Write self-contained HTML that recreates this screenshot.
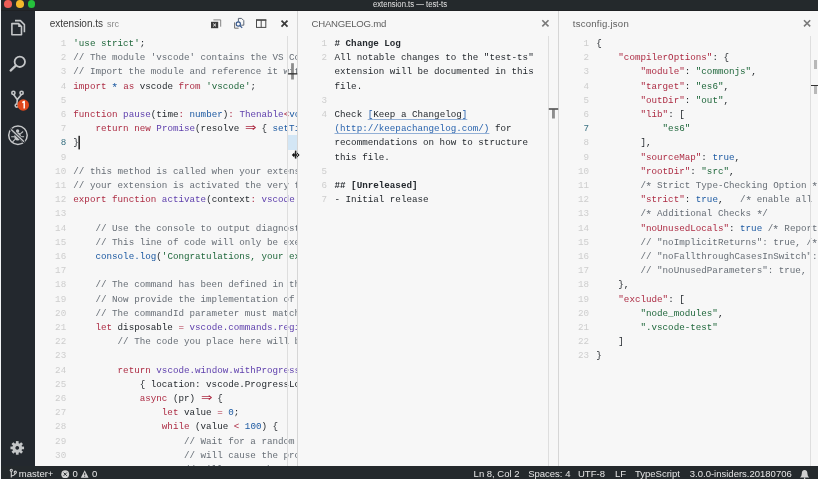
<!DOCTYPE html>
<html><head><meta charset="utf-8">
<style>
*{margin:0;padding:0;box-sizing:border-box}
html,body{width:818px;height:479px;overflow:hidden;background:#f7f7f7;font-family:"Liberation Sans",sans-serif}
.abs{position:absolute}
#title{left:0;top:0;width:818px;height:10px;background:#24292c;overflow:hidden}
#title .t{position:absolute;left:1px;width:818px;top:0.3px;text-align:center;color:#e4e4e4;font-size:8.3px;line-height:8px;transform:scaleX(0.93)}
.dot{position:absolute;top:0.3px;width:7.6px;height:7.6px;border-radius:50%}
#act{left:0;top:10px;width:35px;height:456px;background:#23282e}
#lb{left:0;top:0;width:1px;height:479px;background:#f2f4f6}
#status{left:0;top:466px;width:818px;height:13px;background:#24292c;color:#e6e6e6;font-size:9.5px;line-height:13px}
#status span{position:absolute;top:1.3px}
.grp{position:absolute;top:10px;height:456px;overflow:hidden;background:#f7f7f7}
.hdr{position:absolute;left:0;top:0;right:0;height:26px;font-size:9px;color:#777}
.hdr .nm{position:absolute;top:8px;line-height:12px;color:#6a6a6a}
.code{position:absolute;top:27px;left:0;right:0;font-family:"Liberation Mono",monospace;font-size:9.23px;line-height:14.2px;color:#24292e;white-space:pre}
.num{position:absolute;top:27px;font-family:"Liberation Mono",monospace;font-size:9.23px;line-height:14.2px;color:#cecece;text-align:right;white-space:pre}
.sb{position:absolute;top:26px;bottom:0;width:1px;background:#dedede}
.vb{position:absolute;top:11px;height:455px;width:1px;background:#d6d6d6}
.k{color:#ad2c44}.f{color:#5f40ad}.s{color:#1f673b}.c{color:#676e76}.b{color:#1d5aa2}
.lig{display:inline-block;width:11.04px;text-align:center;font-family:"Liberation Sans",sans-serif;font-size:11px;line-height:10px;transform:scaleX(1.25)}
.lnk{color:#2a64ae;text-decoration:underline;text-decoration-color:#93b0d6;text-underline-offset:2.2px;text-decoration-thickness:0.9px}
.bold{font-weight:bold}
.ast{display:inline-block;transform:translateY(1.6px) scale(1.25)}
svg{position:absolute;overflow:visible}
</style></head><body><div style="position:absolute;left:0;top:0;width:818px;height:479px;will-change:transform">
<div id="title" class="abs">
  <div class="dot" style="left:4.4px;background:#ee5e57"></div>
  <div class="dot" style="left:16.1px;background:#f4b92c"></div>
  <div class="dot" style="left:27.7px;background:#25c13c"></div>
  <div class="t">extension.ts — test-ts</div>
</div>
<div id="act" class="abs">
  <svg width="35" height="456" style="left:0;top:0" viewBox="0 10 35 456">
    <g fill="none" stroke="#c4c6c8" stroke-width="1.6" stroke-linejoin="round">
      <path d="M11.9 23.6 h6.6 l3 3 v8.2 h-9.6 z"/>
      <path d="M15 20.6 h5.4 l4 4 v7.6"/>
    </g>
    <path d="M18.2 23.6 v3.3 h3.3 z" fill="#c4c6c8"/>
    <g fill="none" stroke="#c4c6c8">
      <circle cx="19.8" cy="61.8" r="5.2" stroke-width="1.8"/>
      <path d="M10.6 70.6 L15.8 65.6" stroke-width="2.2" stroke-linecap="round"/>
    </g>
    <g fill="none" stroke="#c4c6c8" stroke-width="1.6">
      <circle cx="13.4" cy="92.9" r="1.6"/>
      <circle cx="21.6" cy="92.9" r="1.6"/>
      <circle cx="16.8" cy="105.6" r="1.6"/>
      <path d="M13.6 94.5 L17.3 99.6 L21.4 94.5 M17.3 99.6 L16.9 104"/>
    </g>
    <circle cx="23.2" cy="105" r="5.8" fill="#e0481c"/>
    <path d="M22.3 102.6 L24.2 101.4 V108.6" fill="none" stroke="#fff" stroke-width="1.5" stroke-linejoin="round"/>
    <circle cx="17.95" cy="135.3" r="9.25" fill="none" stroke="#c4c6c8" stroke-width="1.5"/>
    <g fill="#c4c6c8">
      <ellipse cx="17.6" cy="136.6" rx="3.3" ry="4"/>
      <circle cx="17.6" cy="131" r="1.7"/>
    </g>
    <g stroke="#c4c6c8" stroke-width="1.1" stroke-linecap="round">
      <path d="M14.6 133.6 L12.4 131.8 M14.3 136.8 L11.6 136.8 M14.8 139.6 L12.8 141.6 M20.6 133.6 L22.8 131.8 M20.9 136.8 L23.6 136.8 M20.4 139.6 L22.4 141.6"/>
    </g>
    <path d="M10.6 129 L24.6 142.3" stroke="#23282e" stroke-width="3"/>
    <path d="M11.2 129.6 L24 141.7" stroke="#c4c6c8" stroke-width="1.4"/>
    <g transform="translate(17.25 447.9)" fill="#c4c6c8">
      <path d="M0 -4.9 a4.9 4.9 0 1 0 0.01 0 z M0 -1.9 a1.9 1.9 0 1 1 -0.01 0 z" fill-rule="evenodd"/>
      <rect x="-1.35" y="-6.8" width="2.7" height="3" transform="rotate(0)"/><rect x="-1.35" y="-6.8" width="2.7" height="3" transform="rotate(45)"/><rect x="-1.35" y="-6.8" width="2.7" height="3" transform="rotate(90)"/><rect x="-1.35" y="-6.8" width="2.7" height="3" transform="rotate(135)"/><rect x="-1.35" y="-6.8" width="2.7" height="3" transform="rotate(180)"/><rect x="-1.35" y="-6.8" width="2.7" height="3" transform="rotate(225)"/><rect x="-1.35" y="-6.8" width="2.7" height="3" transform="rotate(270)"/><rect x="-1.35" y="-6.8" width="2.7" height="3" transform="rotate(315)"/>
    </g>
  </svg>
</div>
<!-- group 1 -->
<div class="grp" style="left:35px;width:262px">
  <div class="hdr">
    <div class="nm" style="left:14.7px;color:#3a3a3a;font-size:10px;top:8px">extension.ts<span style="color:#8a8a8a;font-size:9px;margin-left:4px">src</span></div>
    <svg width="262" height="26" style="left:0;top:0" viewBox="35 10 262 26">
      <rect x="211" y="21.8" width="7.2" height="6.4" fill="#3c3c3c"/>
      <path d="M213.2 23.6 l2.8 2.8 M216 23.6 l-2.8 2.8" stroke="#f2f2f2" stroke-width="1"/>
      <path d="M213.4 19.9 h7.3 v6.8" fill="none" stroke="#777" stroke-width="0.9"/>
      <path d="M234.6 22.4 v5.8 h4" fill="none" stroke="#6e6e6e" stroke-width="1"/>
      <path d="M238.4 21.6 v-3.2 h3.2 l2.2 2.2 v4.6 h-2.6" fill="none" stroke="#5a6575" stroke-width="1"/>
      <circle cx="238.3" cy="24" r="2.1" fill="none" stroke="#34558a" stroke-width="1.1"/>
      <path d="M239.8 25.5 l2.4 2.4" stroke="#34558a" stroke-width="1.1"/>
      <rect x="256.5" y="19.8" width="9.3" height="7.6" fill="none" stroke="#4a4a4a" stroke-width="1"/>
      <path d="M256 20.2 h10.3" stroke="#4a4a4a" stroke-width="1.2"/>
      <path d="M261.2 20 v7.4" stroke="#4a4a4a" stroke-width="1"/>
      <path d="M281.5 20.7 l6 6 M287.5 20.7 l-6 6" stroke="#3a3a3a" stroke-width="1.7"/>
    </svg>
  </div>
  <div class="num" style="left:0;width:31.2px">1
2
3
4
5
6
7
<span style="color:#3b7283">8</span>
9
10
11
12
13
14
15
16
17
18
19
20
21
22
23
24
25
26
27
28
29
30
31</div>
  <div class="code" style="left:38.3px"><span class="s">'use strict'</span>;
<span class="c">// The module 'vscode' contains the VS Code extensibility API</span>
<span class="c">// Import the module and reference it with the alias vscode in your code below</span>
<span class="k">import</span> <span class="b"><span class="ast">*</span></span> <span class="k">as</span> vscode <span class="k">from</span> <span class="s">'vscode'</span>;

<span class="k">function</span> <span class="f">pause</span>(time<span class="k">:</span> <span class="b">number</span>)<span class="k">:</span> <span class="f">Thenable</span><span class="k">&lt;</span><span class="b">void</span><span class="k">&gt;</span> {
    <span class="k">return</span> <span class="k">new</span> <span class="f">Promise</span>(resolve <span class="k lig">⇒</span> { <span class="b">setTimeout</span>(resolve, time); });
}

<span class="c">// this method is called when your extension is activated</span>
<span class="c">// your extension is activated the very first time the command is executed</span>
<span class="k">export</span> <span class="k">function</span> <span class="f">activate</span>(context<span class="k">:</span> <span class="f">vscode.ExtensionContext</span>) {

    <span class="c">// Use the console to output diagnostic information (console.log) and errors (console.error)</span>
    <span class="c">// This line of code will only be executed once when your extension is activated</span>
    <span class="b">console.log</span>(<span class="s">'Congratulations, your extension "test-ts" is now active!'</span>);

    <span class="c">// The command has been defined in the package.json file</span>
    <span class="c">// Now provide the implementation of the command with registerCommand</span>
    <span class="c">// The commandId parameter must match the command field in package.json</span>
    <span class="k">let</span> disposable <span class="k">=</span> <span class="f">vscode.commands.registerCommand</span>(<span class="s">'extension.sayHello'</span>, () <span class="k lig">⇒</span> {
        <span class="c">// The code you place here will be executed every time your command is executed</span>

        <span class="k">return</span> <span class="f">vscode.window.withProgress</span>(
            { location: vscode.ProgressLocation.Notification },
            <span class="k">async</span> (pr) <span class="k lig">⇒</span> {
                <span class="k">let</span> value <span class="k">=</span> <span class="b">0</span>;
                <span class="k">while</span> (value <span class="k">&lt;</span> <span class="b">100</span>) {
                    <span class="c">// Wait for a random amount of time</span>
                    <span class="c">// will cause the progress to</span>
                    <span class="c">// will cause the progress to</span></div>
  <div class="sb" style="left:252px"></div>
  <div class="abs" style="left:253px;top:125px;width:9.5px;height:14.8px;background:#d3e6f5"></div>
</div>
<div class="vb" style="left:297px"></div>
<!-- group 2 -->
<div class="grp" style="left:298px;width:260px">
  <div class="hdr">
    <div class="nm" style="left:13.5px;font-size:9.6px;letter-spacing:-0.22px;color:#606060">CHANGELOG.md</div>
    <svg width="260" height="26" style="left:0;top:0" viewBox="298 10 260 26">
      <path d="M542.3 20.2 l6.2 6.2 M548.5 20.2 l-6.2 6.2" stroke="#7a7a7a" stroke-width="1.6"/>
    </svg>
  </div>
  <div class="num" style="left:0;width:29px">1
2


3
4



5
6
7</div>
  <div class="code" style="left:36.5px"><span class="bold"># Change Log</span>
All notable changes to the "test-ts"
extension will be documented in this
file.

Check <span class="lnk"><span style="color:#2a64ae">[</span><span style="color:#24292e">Keep a Changelog</span><span style="color:#2a64ae">]</span></span>
<span class="lnk">(http://keepachangelog.com/)</span> for
recommendations on how to structure
this file.

<span class="bold">## [Unreleased]</span>
- Initial release</div>
  <div class="sb" style="left:250px"></div>
</div>
<div class="vb" style="left:558px"></div>

<!-- group 3 -->
<div class="grp" style="left:559px;width:259px">
  <div class="hdr">
    <div class="nm" style="left:13.8px;font-size:9.6px;letter-spacing:0.22px;color:#606060">tsconfig.json</div>
    <svg width="259" height="26" style="left:0;top:0" viewBox="559 10 259 26">
      <path d="M804 20.2 l6.2 6.2 M810.2 20.2 l-6.2 6.2" stroke="#7a7a7a" stroke-width="1.6"/>
    </svg>
  </div>
  <div class="num" style="left:0;width:30px">1
2
3
4
5
6
<span style="color:#3b7283">7</span>
8
9
10
11
12
13
14
15
16
17
18
19
20
21
22
23</div>
  <div class="code" style="left:37.2px">{
    <span class="k">"compilerOptions"</span>: {
        <span class="k">"module"</span>: <span class="s">"commonjs"</span>,
        <span class="k">"target"</span>: <span class="s">"es6"</span>,
        <span class="k">"outDir"</span>: <span class="s">"out"</span>,
        <span class="k">"lib"</span>: [
            <span class="s">"es6"</span>
        ],
        <span class="k">"sourceMap"</span>: <span class="b">true</span>,
        <span class="k">"rootDir"</span>: <span class="s">"src"</span>,
        <span class="c">/<span class="ast">*</span> Strict Type-Checking Option <span class="ast">*</span>/</span>
        <span class="k">"strict"</span>: <span class="b">true</span>,   <span class="c">/<span class="ast">*</span> enable all  strict type-checking options <span class="ast">*</span>/</span>
        <span class="c">/<span class="ast">*</span> Additional Checks <span class="ast">*</span>/</span>
        <span class="k">"noUnusedLocals"</span>: <span class="b">true</span> <span class="c">/<span class="ast">*</span> Report errors on unused locals. <span class="ast">*</span>/</span>
        <span class="c">// "noImplicitReturns": true, /<span class="ast">*</span> Report error when not all code paths return <span class="ast">*</span>/</span>
        <span class="c">// "noFallthroughCasesInSwitch": true, /<span class="ast">*</span> Report errors <span class="ast">*</span>/</span>
        <span class="c">// "noUnusedParameters": true,   /<span class="ast">*</span> Report errors on unused parameters. <span class="ast">*</span>/</span>
    },
    <span class="k">"exclude"</span>: [
        <span class="s">"node_modules"</span>,
        <span class="s">".vscode-test"</span>
    ]
}</div>
  <div class="sb" style="left:251px"></div>
  <div class="abs" style="left:254.5px;top:50px;width:3.5px;height:8.5px;background:#b8b8b8"></div>
  <div class="abs" style="left:254.5px;top:76px;width:3.5px;height:7.5px;background:#b8b8b8"></div>
  <div class="abs" style="left:252px;top:74.5px;width:7px;height:1.2px;background:#333"></div>
</div>

<div class="abs" style="left:0;top:10px;width:818px;height:1px;background:#1f2124"></div>
<!-- mouse cursors -->
<svg width="818" height="479" style="left:0;top:0;position:absolute">
  <rect x="78.5" y="135.8" width="1.3" height="13.6" fill="#000"/>
  <rect x="291.1" y="63.2" width="2.8" height="16.3" fill="#8c8c8c"/>
  <rect x="288" y="73.2" width="9.3" height="1.3" fill="#2e2e2e"/>
  <rect x="552" y="109.5" width="2.9" height="9" fill="#8e8e8e"/>
  <rect x="548.8" y="108.3" width="9.4" height="1.4" fill="#3a3a3a"/>
  <g>
    <path d="M291.8 155 L294.4 152.4 V157.6 Z M299.6 155 L297 152.4 V157.6 Z M293.5 154.3 H298 V155.7 H293.5 Z" fill="#111"/>
    <rect x="294.9" y="150.6" width="1.5" height="8" fill="#222"/>
  </g>
</svg>

<div id="status" class="abs">
  <svg width="20" height="13" style="left:0;top:0" viewBox="0 466 20 13">
    <g fill="none" stroke="#d0d0d0" stroke-width="1.1">
      <circle cx="11.3" cy="470.3" r="1.1"/>
      <circle cx="15.3" cy="472.2" r="1.1"/>
      <path d="M11.3 471.4 V477.5 M15.3 473.3 Q15 475.5 11.4 476"/>
    </g>
  </svg>
  <span style="left:18.8px">master+</span>
  <svg width="40" height="13" style="left:58px;top:0" viewBox="58 466 40 13">
    <circle cx="65.2" cy="474.2" r="3.9" fill="#d0d0d0"/>
    <path d="M63.6 472.6 l3.2 3.2 M66.8 472.6 l-3.2 3.2" stroke="#24292c" stroke-width="1"/>
    <path d="M84.7 470.2 L88.6 477.8 H80.8 Z" fill="#d0d0d0"/>
    <path d="M84.7 472.8 v2.6 M84.7 476.2 v0.8" stroke="#24292c" stroke-width="0.9"/>
  </svg>
  <span style="left:72.6px">0</span>
  <span style="left:91.9px">0</span>
  <span style="left:473.6px">Ln 8, Col 2</span>
  <span style="left:528.2px">Spaces: 4</span>
  <span style="left:578px">UTF-8</span>
  <span style="left:615px">LF</span>
  <span style="left:635px">TypeScript</span>
  <span style="left:689.8px">3.0.0-insiders.20180706</span>
  <svg width="12" height="13" style="left:798px;top:0" viewBox="798 466 12 13">
    <path d="M800 477.5 Q801.8 476 801.8 473.5 Q801.8 470.3 804.6 470 Q807.4 470.3 807.4 473.5 Q807.4 476 809.2 477.5 Z" fill="#d0d0d0"/>
    <path d="M804.6 477.5 v1.5" stroke="#d0d0d0" stroke-width="1.3"/>
  </svg>
</div>
<div id="lb" class="abs"></div>
</div></body></html>
